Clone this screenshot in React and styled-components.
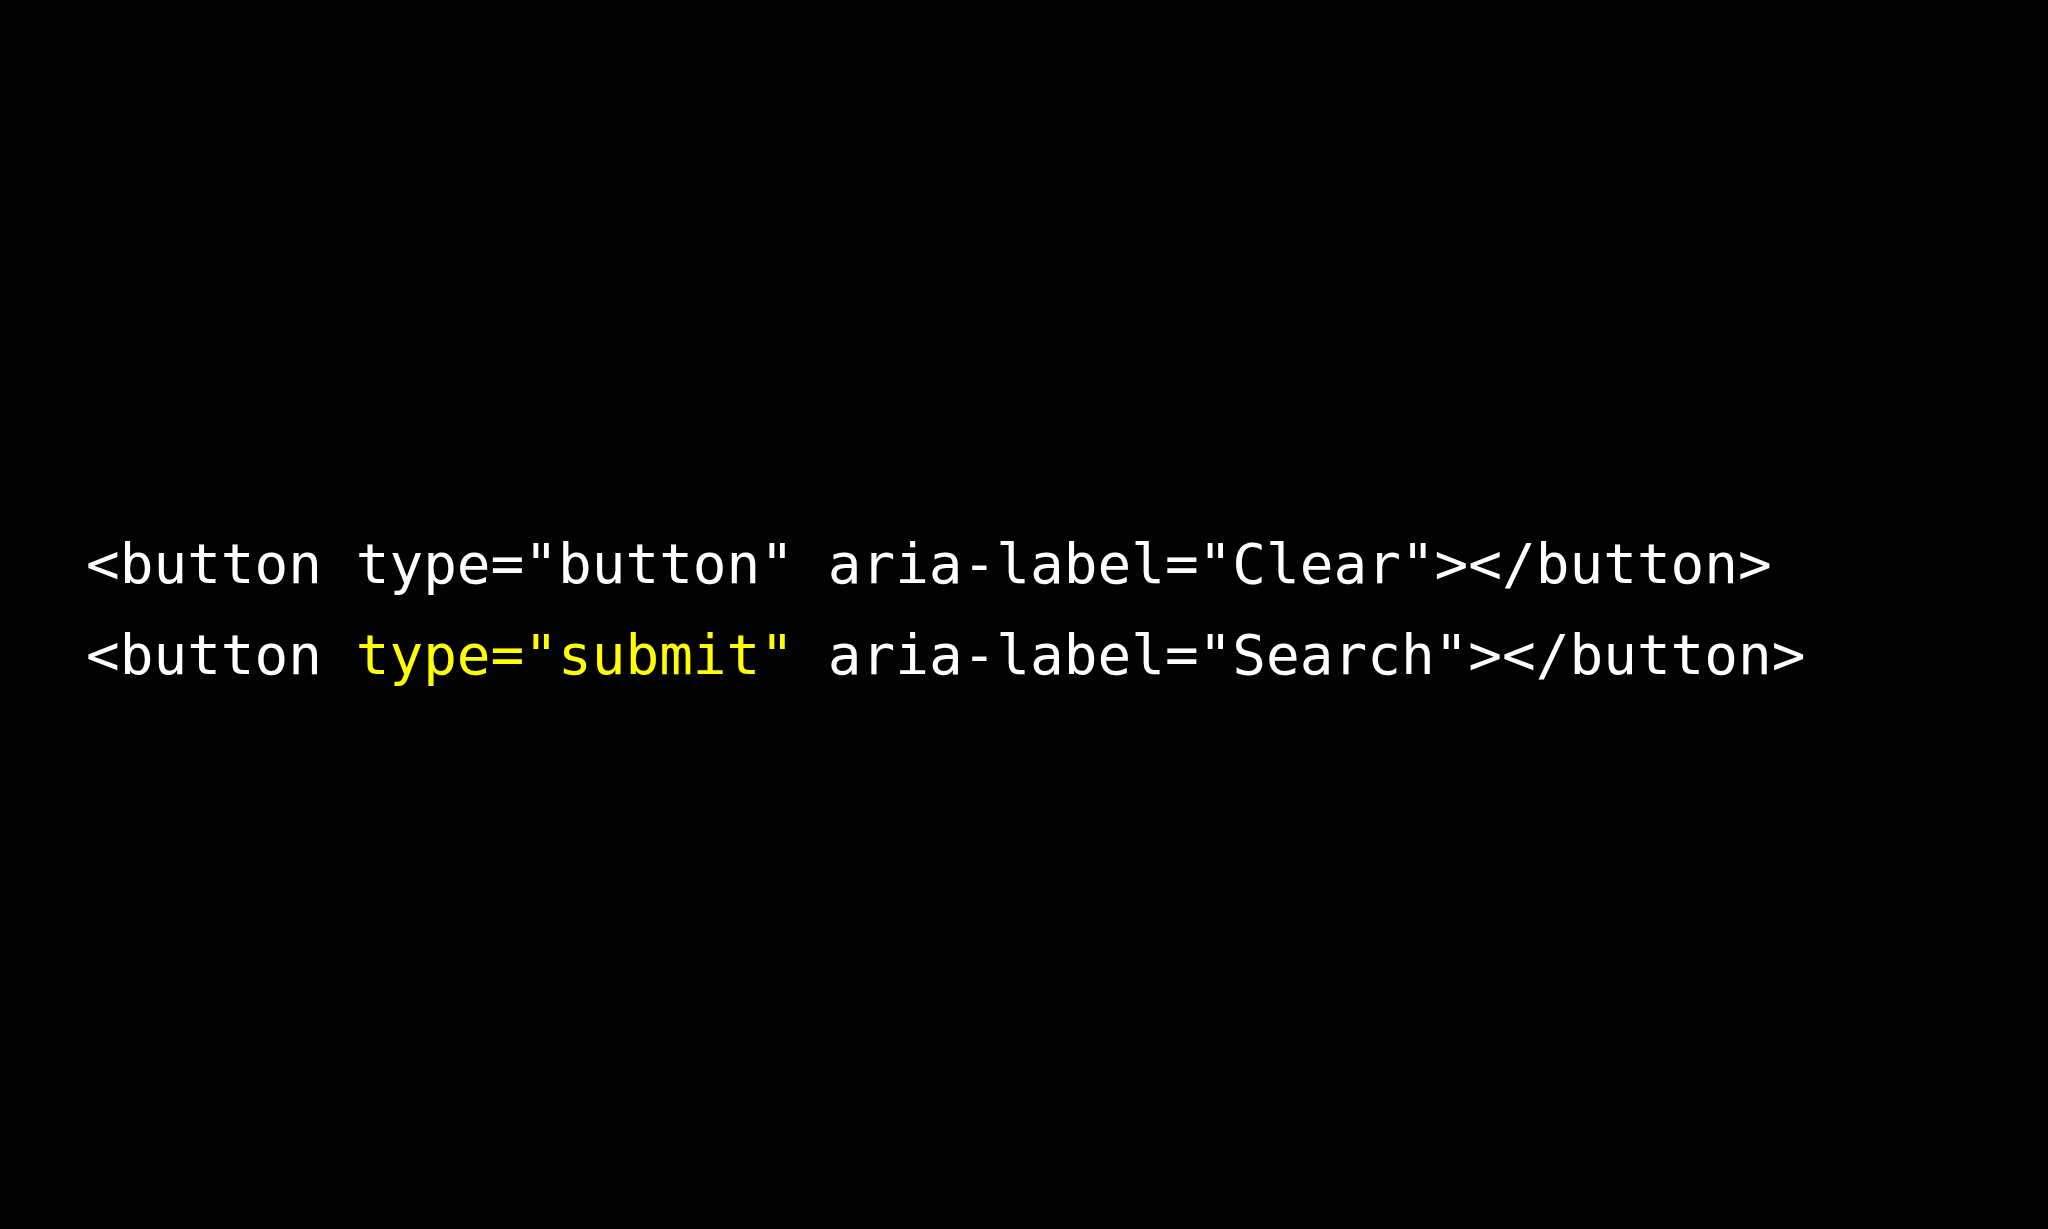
import React from "react";
import styled, { createGlobalStyle } from "styled-components";

const GlobalStyle = createGlobalStyle`
  html, body {
    margin: 0;
    padding: 0;
    background: #020203;
  }
`;

const Screen = styled.main`
  width: 100vw;
  height: 100vh;
  box-sizing: border-box;
  background: #020203;
  padding: 518px 0 0 86px;
  overflow: hidden;
`;

const CodeBlock = styled.pre`
  margin: 0;
  font-family: "DejaVu Sans Mono", "Liberation Mono", monospace;
  font-size: 56px;
  line-height: 91px;
  color: #ffffff;
  white-space: pre;
`;

const Line = styled.div`
  display: block;
`;

const Highlight = styled.span`
  color: #ffff00;
`;

export default function App() {
  return (
    <>
      <GlobalStyle />
      <Screen>
        <CodeBlock>
          <Line>{`<button type="button" aria-label="Clear"></button>`}</Line>
          <Line>
            {`<button `}
            <Highlight>{`type="submit"`}</Highlight>
            {` aria-label="Search"></button>`}
          </Line>
        </CodeBlock>
      </Screen>
    </>
  );
}
